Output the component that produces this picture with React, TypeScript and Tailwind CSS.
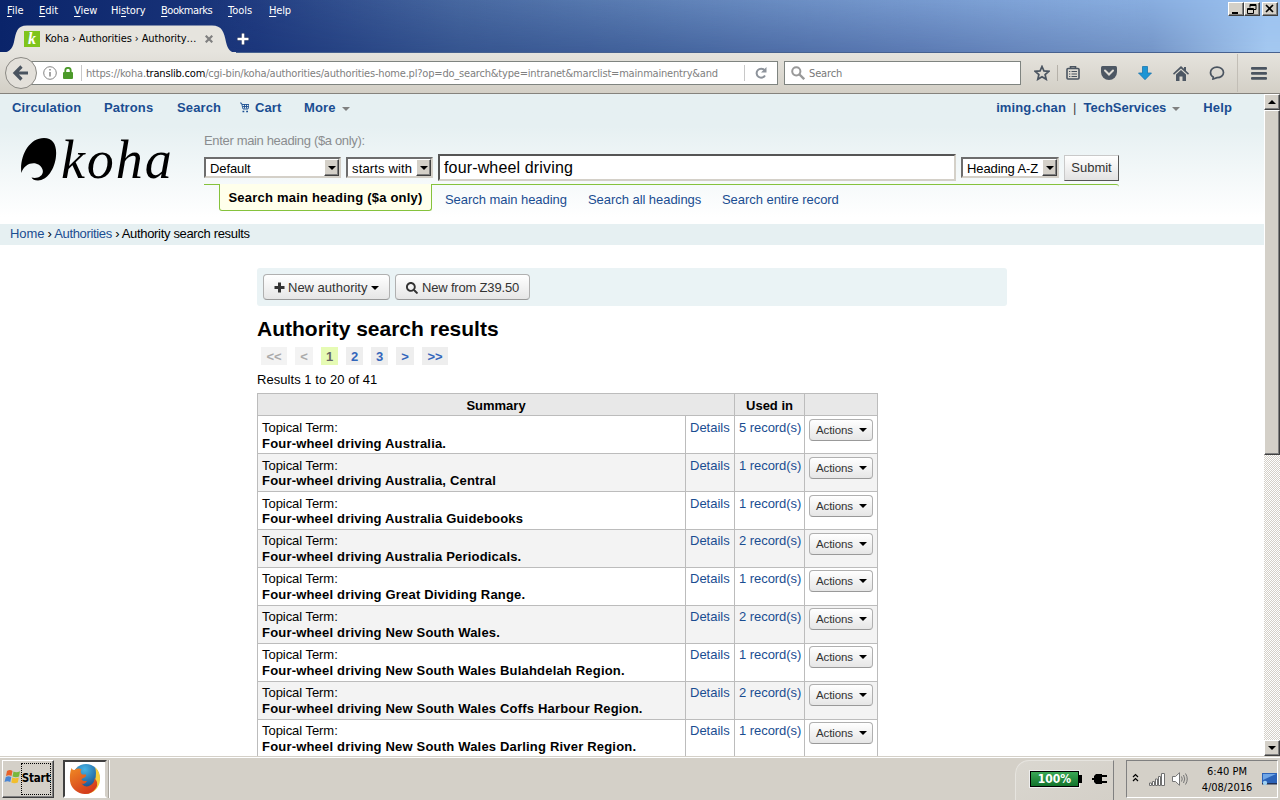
import React from "react";
import { FaSearch } from "react-icons/fa";

const menus = [
  { label: "File", cls: "w-8" },
  { label: "Edit", cls: "w-[35px]" },
  { label: "View", cls: "w-[37px]" },
  { label: "History", cls: "w-[50px] tracking-[-0.1px]", key: 2 },
  { label: "Bookmarks", cls: "w-[67px] tracking-[-0.45px]" },
  { label: "Tools", cls: "w-[41px]" },
  { label: "Help", cls: "w-10 tracking-[-0.2px]" },
];

const rows = [
  { name: "Four-wheel driving Australia.", count: 5 },
  { name: "Four-wheel driving Australia, Central", count: 1 },
  { name: "Four-wheel driving Australia Guidebooks", count: 1 },
  { name: "Four-wheel driving Australia Periodicals.", count: 2 },
  { name: "Four-wheel driving Great Dividing Range.", count: 1 },
  { name: "Four-wheel driving New South Wales.", count: 2 },
  { name: "Four-wheel driving New South Wales Bulahdelah Region.", count: 1 },
  { name: "Four-wheel driving New South Wales Coffs Harbour Region.", count: 2 },
  { name: "Four-wheel driving New South Wales Darling River Region.", count: 1 },
];

const raised =
  "bg-[#d4d0c8] border border-t-white border-l-white border-r-[#404040] border-b-[#404040] shadow-[inset_-1px_-1px_0_#808080]";

const Caret = ({ className = "" }: { className?: string }) => (
  <svg width="8" height="4" viewBox="0 0 8 4" className={className}>
    <path d="M0 0h8L4 4z" fill="currentColor" />
  </svg>
);

const TitleBar = () => (
  <div className="relative h-[52px] bg-[linear-gradient(90deg,#0a246a_0%,#1c377c_20%,#365590_36%,#42629c_50%,#5c7bb4_72%,#7596c8_90%,#a4c8f0_99%)]">
    <div className="absolute inset-0 bg-[linear-gradient(90deg,transparent_15%,rgba(150,190,235,0.3)_50%,rgba(150,190,240,0.6)_90%)] [mask-image:linear-gradient(180deg,black,transparent)]" />
    <div className="relative flex h-5 items-center pl-[7px] text-[11px] text-white">
      {menus.map(({ label, cls, key = 0 }) => (
        <span key={label} className={`pt-[2px] ${cls}`}>
          {label.slice(0, key)}
          <u className="underline-offset-2">{label[key]}</u>
          {label.slice(key + 1)}
        </span>
      ))}
      <div className="ml-auto mr-[2px] flex self-start pt-[2px]">
        <span className={`h-[14px] w-4 ${raised}`}>
          <svg width="14" height="12" viewBox="0 0 14 12"><path d="M3 9h6v2H3z" /></svg>
        </span>
        <span className={`h-[14px] w-4 ${raised}`}>
          <svg width="14" height="12" viewBox="0 0 14 12" fill="none" stroke="black">
            <path d="M5 4.500V1.500h6v5H9M5 2.500h6M2.500 5.500h6v5h-6zM2.500 6.500h6" />
          </svg>
        </span>
        <span className={`ml-[2px] h-[14px] w-4 ${raised}`}>
          <svg width="14" height="12" viewBox="0 0 14 12" stroke="black" strokeWidth="1.600">
            <path d="M3 2l7 7M10 2L3 9" />
          </svg>
        </span>
      </div>
    </div>
    <div className="relative mt-[5px] flex h-[27px] w-[238px] items-center">
      <svg width="238" height="28" viewBox="0 0 238 28" className="absolute left-0 top-0">
        <path d="M0 28C9 27.500 12 25 14 17C16 7 17 .5 27 .5H212C222 .5 224 7 226 17C228 25 230 27.500 238 28Z" fill="#e6e4de" />
      </svg>
      <span className="relative ml-6 flex h-4 w-4 items-center justify-center bg-[#7fc41c] font-['Liberation_Serif',serif] text-[16px] font-bold italic leading-4 text-white">k</span>
      <span className="relative ml-[5px] w-[160px] whitespace-nowrap pt-[2px] text-[11px] tracking-[-0.1px] text-black">Koha › Authorities › Authority…</span>
      <svg width="8" height="8" viewBox="0 0 8 8" className="relative" stroke="#808080" strokeWidth="2.200">
        <path d="M.7.7l6.600 6.600M7.300.7L.7 7.300" />
      </svg>
      <svg width="12" height="12" viewBox="0 0 12 12" className="absolute left-[237px] top-[8px]">
        <path d="M4 0h4v4h4v4H8v4H4V8H0V4h4z" fill="#1d2f60" />
        <path d="M4.700.5h2.600v4.200h4.200v2.600H7.300v4.200H4.700V7.300H.5V4.700h4.200z" fill="#fff" />
      </svg>
    </div>
  </div>
);

const Toolbar = () => (
  <div className="relative flex h-[42px] items-center border-b border-[#85827c] bg-linear-to-b from-[#e6e4de] to-[#d3cfc6] pl-[5px] pt-px">
    <div className="absolute left-[236px] right-0 top-0 h-px bg-[#47618f]" />
    <svg width="32" height="32" viewBox="0 0 32 32" className="relative z-10">
      <circle cx="16" cy="16" r="15.500" fill="#e3e0da" stroke="#8b8984" />
      <path d="M16.500 9.500L10 16l6.500 6.500M10.500 16H23" fill="none" stroke="#4a5460" strokeWidth="3.200" />
    </svg>
    <div className="-ml-2 flex h-6 w-[749px] items-center border border-[#7f8480] bg-white pl-[13px] text-[11px] text-[#808080]">
      <svg width="14" height="14" viewBox="0 0 14 14" fill="none" stroke="#858585">
        <circle cx="7" cy="7" r="6.300" />
        <path d="M7 6v4.500M7 3v1.600" strokeWidth="1.500" />
      </svg>
      <svg width="10" height="12" viewBox="0 0 10 12" className="ml-[6px]">
        <path d="M2.300 6V3.500a2.700 2.700 0 015.400 0V6" fill="none" stroke="#4c9a2a" strokeWidth="1.800" />
        <rect y="5" width="10" height="7" rx="1" fill="#4c9a2a" />
      </svg>
      <span className="ml-2 h-4 w-px bg-[#c8c8c8]" />
      <span className="ml-[4px] w-[658px] overflow-hidden whitespace-nowrap pt-[2px] tracking-[-0.19px]">
        https://koha.<span className="text-black">translib.com</span>/cgi-bin/koha/authorities/authorities-home.pl?op=do_search&amp;type=intranet&amp;marclist=mainmainentry&amp;and
      </span>
      <span className="h-4 w-px bg-[#c8c8c8]" />
      <svg width="12" height="12" viewBox="0 0 12 12" className="ml-[10px]">
        <path d="M9.500 3.200A4.500 4.500 0 1010 8.500" fill="none" stroke="#8d939b" strokeWidth="2" />
        <path d="M11.500 0v5.500H6z" fill="#8d939b" />
      </svg>
    </div>
    <div className="ml-[6px] flex h-6 w-[237px] items-center border border-[#7f8480] bg-white pl-[6px] text-[11px] text-[#787878]">
      <svg width="14" height="14" viewBox="0 0 14 14" fill="none" stroke="#999">
        <circle cx="5.300" cy="5.300" r="4.100" strokeWidth="2" />
        <path d="M8.500 8.500l4.700 4.700" strokeWidth="2.400" />
      </svg>
      <span className="ml-1 pt-[2px] tracking-[-0.15px]">Search</span>
    </div>
    <svg width="16" height="16" viewBox="0 0 16 16" className="ml-[13px]" fill="none" stroke="#4a5460" strokeWidth="1.700">
      <path d="M8 1.500l1.900 4.400 4.900.4-3.700 3.200 1.100 4.800L8 11.700l-4.200 2.600 1.100-4.800L1.200 6.300l4.900-.4z" />
    </svg>
    <span className="ml-[7px] h-4 w-px bg-[#b5b1a9]" />
    <svg width="14" height="14" viewBox="0 0 14 14" className="ml-2" fill="none" stroke="#4a5460">
      <path d="M1 3.500Q1 2.500 2 2.500H12Q13 2.500 13 3.500V12Q13 13 12 13H2Q1 13 1 12Z" strokeWidth="1.600" />
      <path d="M4.500 2V.8h5V2" strokeWidth="1.600" />
      <path d="M3 5.500h1.300M5.500 5.500H11M3 8h1.300M5.500 8H11M3 10.500h1.300M5.500 10.500H11" strokeWidth="1.100" />
    </svg>
    <svg width="16" height="14" viewBox="0 0 16 14" className="ml-[21px]">
      <path d="M1.500 0h13Q16 0 16 1.500V6a8 8 0 01-16 0V1.500Q0 0 1.500 0z" fill="#4d5763" />
      <path d="M4 4.500l4 4 4-4" fill="none" stroke="#e0ddd6" strokeWidth="2" strokeLinecap="round" />
    </svg>
    <svg width="14" height="14" viewBox="0 0 14 14" className="ml-[21px]">
      <path d="M4.500.5h5V7h4L7 13.700.5 7h4z" fill="#1c95d4" stroke="#1a76b0" strokeWidth=".8" />
    </svg>
    <svg width="16" height="15" viewBox="0 0 16 15" className="ml-[21px]" fill="#4d5763">
      <path d="M8 0l3 2.800V1h2v3.700l3 2.900-1 1.200L8 2.500 1 8.800 0 7.600z" />
      <path d="M3 8.500L8 4l5 4.500V15H9.500v-4.500h-3V15H3z" />
    </svg>
    <svg width="16" height="14" viewBox="0 0 16 14" className="ml-5" fill="none" stroke="#4a5460" strokeWidth="1.700">
      <path d="M4.200 11A5.300 5.300 0 011.500 6.400C1.500 3.300 4.400 1.100 8 1.100s6.500 2.200 6.500 5.300S11.600 11.700 8 11.700L4 13z" />
    </svg>
    <span className="ml-[12px] h-[38px] w-px bg-[#c2beb6]" />
    <svg width="16" height="13" viewBox="0 0 16 13" className="ml-[13px]" fill="#4a5460">
      <rect width="16" height="2.800" rx="1" />
      <rect y="5" width="16" height="2.800" rx="1" />
      <rect y="10" width="16" height="2.800" rx="1" />
    </svg>
  </div>
);

const Select = ({ value, className }: { value: string; className: string }) => (
  <div className={`flex h-[21px] items-center border-2 border-t-[#6d6d6d] border-l-[#6d6d6d] border-r-[#d4d0c8] border-b-[#d4d0c8] bg-white pl-1 text-[13px] text-black ${className}`}>
    <span className="flex-1 whitespace-nowrap pt-[2px]">{value}</span>
    <span className={`flex h-[17px] w-[15px] items-center justify-center ${raised}`}>
      <Caret />
    </span>
  </div>
);

const KohaLogo = () => (
  <div className="flex h-[50px] w-[160px]">
    <svg width="36" height="43" viewBox="0 0 36 43" className="mt-[8px]">
      <path d="M.3 35C-1.500 18 8 0 23 0C32 0 36 7 35 18C34 31 26 42.500 17 42.500C13.500 42.500 11.500 41.500 10.500 39.500C17 41.500 23.500 37 21.500 31.500C18.500 22.500 4 23 .3 35Z" />
    </svg>
    <span className="ml-[4px] whitespace-nowrap font-['Liberation_Serif',serif] text-[54px] italic leading-[61px] tracking-[1.900px] text-black">koha</span>
  </div>
);

const PageHeader = () => (
  <header className="h-[130px] bg-linear-to-b from-[#e6f0f2] from-25% to-white to-95% text-[13px]">
    <nav className="flex h-[27px] items-center pl-3 pr-8 font-bold tracking-[0.12px] text-[#1a4d91]">
      <span className="w-[92px]">Circulation</span>
      <span className="w-[73px]">Patrons</span>
      <span className="w-[63px]">Search</span>
      <svg width="9" height="11" viewBox="0 0 9 11" className="mr-[6px]" fill="none" stroke="#1a4d91">
        <path d="M0 1h1.500L3 7h5L9 2.500H2M2.500 4.500h6M4.500 2.500v4M6.500 2.500v4" strokeWidth=".9" />
        <path d="M2.500 9.500h1.800M6.200 9.500H8" strokeWidth="1.500" />
      </svg>
      <span className="w-[49px]">Cart</span>
      <span className="w-[38px]">More</span>
      <Caret className="mt-[3px] text-[#808080]" />
      <span className="ml-auto">iming.chan</span>
      <span className="mx-[7px] font-normal text-[#444]">|</span>
      <span className="tracking-[0]">TechServices</span>
      <Caret className="ml-[6px] mt-[3px] text-[#808080]" />
      <span className="ml-[23px]">Help</span>
    </nav>
    <div className="flex pl-[21px]">
      <div className="w-[183px] pt-[9px]">
        <KohaLogo />
      </div>
      <div className="w-[915px]">
        <label className="block pt-[10px] leading-5 tracking-[-0.34px] text-[#8a8d8f]">Enter main heading ($a only):</label>
        <div className="mt-[3px] flex h-[27px] items-center">
          <Select value="Default" className="w-[137px] tracking-[-0.1px]" />
          <Select value="starts with" className="ml-[5px] w-[87px] tracking-[0.15px]" />
          <div className="ml-[5px] flex h-[27px] w-[518px] items-center border-2 border-t-[#555] border-l-[#555] border-r-[#d4d0c8] border-b-[#d4d0c8] bg-white pl-1 text-[16px] tracking-[0.15px] text-black">
            four-wheel driving
          </div>
          <Select value="Heading A-Z" className="ml-[5px] w-[98px] tracking-[-0.1px]" />
          <button className="ml-[5px] h-[26px] w-[55px] border border-[#c9c9c9] border-b-[#555] border-r-[#555] bg-linear-to-b from-white to-[#e2e2e2] pt-px text-[#333]">Submit</button>
        </div>
        <div className="mt-[3px] flex h-[27px] text-[#1a4d91]">
          <div className="h-[5px] w-[15px] rounded-bl-[3px] border-t border-[#85c23c]" />
          <div className="flex h-[27px] w-[213px] items-center justify-center whitespace-nowrap rounded-b-[3px] border border-t-0 border-[#85c23c] bg-[#ffffeb] pt-px font-bold tracking-[0.22px] text-black">
            Search main heading ($a only)
          </div>
          <div className="flex flex-1 rounded-tr-[3px] border-t border-[#85c23c] pl-[13px] pt-[5px] leading-5 tracking-[-0.05px]">
            <a className="w-[143px]">Search main heading</a>
            <a className="w-[134px]">Search all headings</a>
            <a>Search entire record</a>
          </div>
        </div>
      </div>
    </div>
  </header>
);

const pageLinks = [
  { label: "<<", cls: "w-[26px] mr-2 bg-[#f3f3f3] text-[#aaa]" },
  { label: "<", cls: "w-[18px] mr-2 bg-[#f3f3f3] text-[#aaa]" },
  { label: "1", cls: "w-[17px] mr-2 bg-[#e6fbb4] text-[#666]" },
  { label: "2", cls: "w-[17px] mr-2 bg-[#eee] text-[#36b]" },
  { label: "3", cls: "w-[17px] mr-2 bg-[#eee] text-[#36b]" },
  { label: ">", cls: "w-[18px] mr-2 bg-[#eee] text-[#36b]" },
  { label: ">>", cls: "w-[26px] bg-[#eee] text-[#36b]" },
];

const btn = "flex items-center rounded-[4px] border border-[#b0b0b0] border-b-[#999] bg-linear-to-b from-white to-[#e6e6e6] text-[#333]";

const Results = () => (
  <main className="ml-[257px] w-[750px] pt-[23px] text-[13px]">
    <div className="flex h-[38px] items-center gap-[5px] rounded-[3px] bg-[#eaf3f5] pl-[6px]">
      <button className={`h-[26px] w-[127px] whitespace-nowrap pl-[10px] pt-px ${btn}`}>
        <svg width="11" height="11" viewBox="0 0 11 11" className="mr-[3px]" fill="#333">
          <path d="M4 .5h3V4h3.500v3H7v3.500H4V7H.5V4H4z" />
        </svg>
        New authority
        <Caret className="ml-1 text-black" />
      </button>
      <button className={`h-[26px] w-[135px] whitespace-nowrap pl-[10px] pt-px tracking-[-0.18px] ${btn}`}>
        <FaSearch size={12} className="mr-1" />
        New from Z39.50
      </button>
    </div>
    <h1 className="mt-[9px] text-[21px] font-bold leading-7">Authority search results</h1>
    <div className="ml-1 mt-[4px] flex font-bold">
      {pageLinks.map(({ label, cls }) => (
        <span key={label} className={`h-[18px] text-center leading-[19px] ${cls}`}>{label}</span>
      ))}
    </div>
    <p className="mt-[5px] leading-5 tracking-[0.05px]">Results 1 to 20 of 41</p>
    <table className="mt-[3px] w-[621px] table-fixed border-collapse leading-4 [&_td]:border [&_td]:border-[#bcbcbc] [&_th]:border [&_th]:border-[#bcbcbc]">
      <colgroup>
        <col className="w-[428px]" />
        <col className="w-[49px]" />
        <col className="w-[70px]" />
        <col className="w-[73px]" />
      </colgroup>
      <thead>
        <tr className="h-[22px] bg-[#e8e8e8]">
          <th colSpan={2} className="pt-[3px]">Summary</th>
          <th className="pt-[3px]">Used in</th>
          <th />
        </tr>
      </thead>
      <tbody>
        {rows.map(({ name, count }, i) => (
          <tr key={name} className={`h-[38px] align-top ${i % 2 ? "bg-[#f3f3f3]" : "bg-white"}`}>
            <td className="whitespace-nowrap pl-1">
              <div className={`tracking-[-0.05px] ${i > 2 ? "pt-[3px]" : "pt-1"}`}>Topical Term:</div>
              <div className={`font-bold tracking-[0.19px] ${i === 1 || i === 2 ? "-mt-px" : ""}`}>{name}</div>
            </td>
            <td className={`pl-1 text-[#1a4d91] ${i > 2 ? "pt-[3px]" : "pt-1"}`}>Details</td>
            <td className={`whitespace-nowrap pl-1 tracking-[-0.05px] text-[#1a4d91] ${i > 2 ? "pt-[3px]" : "pt-1"}`}>{count} record(s)</td>
            <td className={`pl-1 ${i > 3 ? "pt-[2px]" : "pt-[3px]"}`}>
              <button className={`h-[22px] w-16 pl-[6px] text-[11.5px] tracking-[-0.1px] ${btn}`}>
                Actions
                <Caret className="ml-[6px] text-black" />
              </button>
            </td>
          </tr>
        ))}
      </tbody>
    </table>
  </main>
);

const Scrollbar = () => (
  <div className="flex w-4 flex-col bg-[repeating-conic-gradient(#d4d0c8_0_25%,#fff_0_50%)] bg-[length:2px_2px]">
    <div className={`flex h-4 items-center justify-center ${raised}`}>
      <Caret className="rotate-180" />
    </div>
    <div className={`h-[345px] ${raised}`} />
    <div className={`mt-auto flex h-4 items-center justify-center ${raised}`}>
      <Caret />
    </div>
  </div>
);

const Taskbar = () => (
  <footer className="flex h-[44px] border-t border-[#d4d0c8] bg-[#d4d0c8] pt-[3px] pl-[2px] shadow-[inset_0_1px_0_#fff]">
    <button className={`flex h-[38px] w-[52px] items-center ${raised}`}>
      <svg width="17" height="16" viewBox="0 0 17 16" className="-mt-1 ml-px">
        <path d="M3 2Q6 0 8.500 2L7.500 7Q5 5.500 2 7Z" fill="#e8622a" />
        <path d="M9.500 2.500Q12.500 4 16 2.200L15 7.500Q12 9 8.500 7.500Z" fill="#78b83c" />
        <path d="M1.800 8Q4.500 6.500 7.300 8L6.300 13Q3.500 11.500.5 13Z" fill="#4a86d4" />
        <path d="M8.300 8.500Q11.500 10 14.800 8.500L13.800 13.500Q10.500 15 7.300 13.500Z" fill="#f2be2c" />
      </svg>
      <span className="flex h-8 w-[30px] items-center justify-center border border-dotted border-black text-[11.5px] font-bold tracking-[-0.2px]">Start</span>
    </button>
    <div className="ml-[9px] flex h-[38px] w-[44px] items-center justify-center border-2 border-t-[#404040] border-l-[#404040] border-r-[#d4d0c8] border-b-white bg-white">
      <svg width="32" height="32" viewBox="0 0 32 32">
        <defs>
          <radialGradient id="globe" cx=".45" cy=".2" r=".8">
            <stop offset="0" stopColor="#45b4e6" />
            <stop offset="1" stopColor="#123d7c" />
          </radialGradient>
          <linearGradient id="fox" x1="0" y1="0" x2=".6" y2="1">
            <stop offset="0" stopColor="#f08a24" />
            <stop offset="1" stopColor="#d33a1c" />
          </linearGradient>
        </defs>
        <circle cx="17" cy="14.500" r="13.500" fill="url(#globe)" />
        <path d="M26 4Q31.500 9 31 17A15 15 0 0117 31L17 27Q25 24 26 17Q28 10 26 4Z" fill="#f6cf3c" />
        <path d="M2.500 5Q3.500 7.500 5.500 7Q9 4.500 12.500 6.500Q10.500 9 13 11.500H17Q18 13 15.500 14.500L12.500 16Q13 18.500 18 18Q16 22 12.500 20.500Q16 25 21 22.500Q26 20 25.500 15Q30 20 27 25Q23 31 16 31A15 15 0 011 18Q.5 10 2.500 5Z" fill="url(#fox)" />
      </svg>
    </div>
    <div className="h-[38px] w-[3px] border-r border-white bg-[#d4d0c8]">
      <div className="ml-px h-[38px] w-px bg-[#a9a59d]" />
    </div>
    <div className="ml-auto flex h-[40px] w-[99px] items-center rounded-tl-[14px] border-l border-t border-[#e6e4df] border-r border-r-[#808080] bg-linear-to-br from-[#dad7d0] to-[#d4d0c8] pb-[3px] pl-[14px]">
      <span className="flex h-4 w-[49px] items-center justify-center border border-black bg-linear-to-b from-[#3aa856] to-[#11742c] text-[12px] font-bold text-white shadow-[0_0_0_1px_#eee]">100%</span>
      <span className="h-2 w-[3px] bg-black" />
      <svg width="15" height="12" viewBox="0 0 15 12" className="ml-[10px]">
        <path d="M4 1h6v10H4L2 9V7H0V5h2V3zM10 2h5v2h-5zM10 8h5v2h-5z" />
      </svg>
    </div>
    <div className="ml-[12px] mr-[2px] flex h-[38px] w-[152px] items-center border border-t-[#808080] border-l-[#808080] border-r-white border-b-white pl-[5px]">
      <svg width="7" height="9" viewBox="0 0 7 9" className="-mt-1 shrink-0" fill="none" stroke="black" strokeWidth="1.200">
        <path d="M1 4l2.500-2.500L6 4M1 8l2.500-2.500L6 8" />
      </svg>
      <svg width="16" height="13" viewBox="0 0 16 13" className="ml-[10px] shrink-0" fill="#fff" stroke="#707070">
        <path d="M.5 10h2v2.500h-2zM3.500 8.500h2v4h-2zM6.500 6h2v6.500h-2zM9.500 3.500h2v9h-2zM12.500.5h3v12h-3z" />
      </svg>
      <svg width="17" height="14" viewBox="0 0 17 14" className="ml-[7px] shrink-0" fill="none" stroke="#757575">
        <path d="M.5 4.500h3L7.500.7v12.600L3.500 9.500h-3z" fill="#fff" />
        <path d="M9.500 4.500q1.500 2.500 0 5M11.500 3q2.500 4 0 8M13.500 1.500q3.500 5.500 0 11" />
      </svg>
      <div className="w-[74px] shrink-0 pl-[2px] pt-px text-center text-[11px] leading-4 text-black">
        <div>6:40 PM</div>
        <div>4/08/2016</div>
      </div>
      <svg width="15" height="14" viewBox="0 0 15 14" className="shrink-0 -translate-x-px">
        <path d="M0 1h15v10H0z" fill="#2b62b8" />
        <path d="M1 2h13L1 8z" fill="#6fa5e6" />
        <path d="M0 11h15v1.500H0z" fill="#1e2f55" />
        <circle cx="3" cy="11" r="2.200" fill="#9fd0f0" />
      </svg>
    </div>
  </footer>
);

const App = () => (
  <div className="flex h-[800px] w-[1280px] flex-col overflow-hidden bg-white font-['DejaVu_Sans_Condensed','DejaVu_Sans',sans-serif]">
    <TitleBar />
    <Toolbar />
    <div className="flex h-[662px] font-['Liberation_Sans',Arial,sans-serif] text-black">
      <div className="w-[1264px] overflow-hidden">
        <PageHeader />
        <div className="h-[21px] bg-[#e6f0f2] pl-[10px] text-[13px] leading-5 tracking-[-0.33px]">
          <a className="tracking-[-0.1px] text-[#1a4d91]">Home</a> › <a className="text-[#1a4d91]">Authorities</a> › Authority search results
        </div>
        <Results />
      </div>
      <Scrollbar />
    </div>
    <Taskbar />
  </div>
);

export default App;
